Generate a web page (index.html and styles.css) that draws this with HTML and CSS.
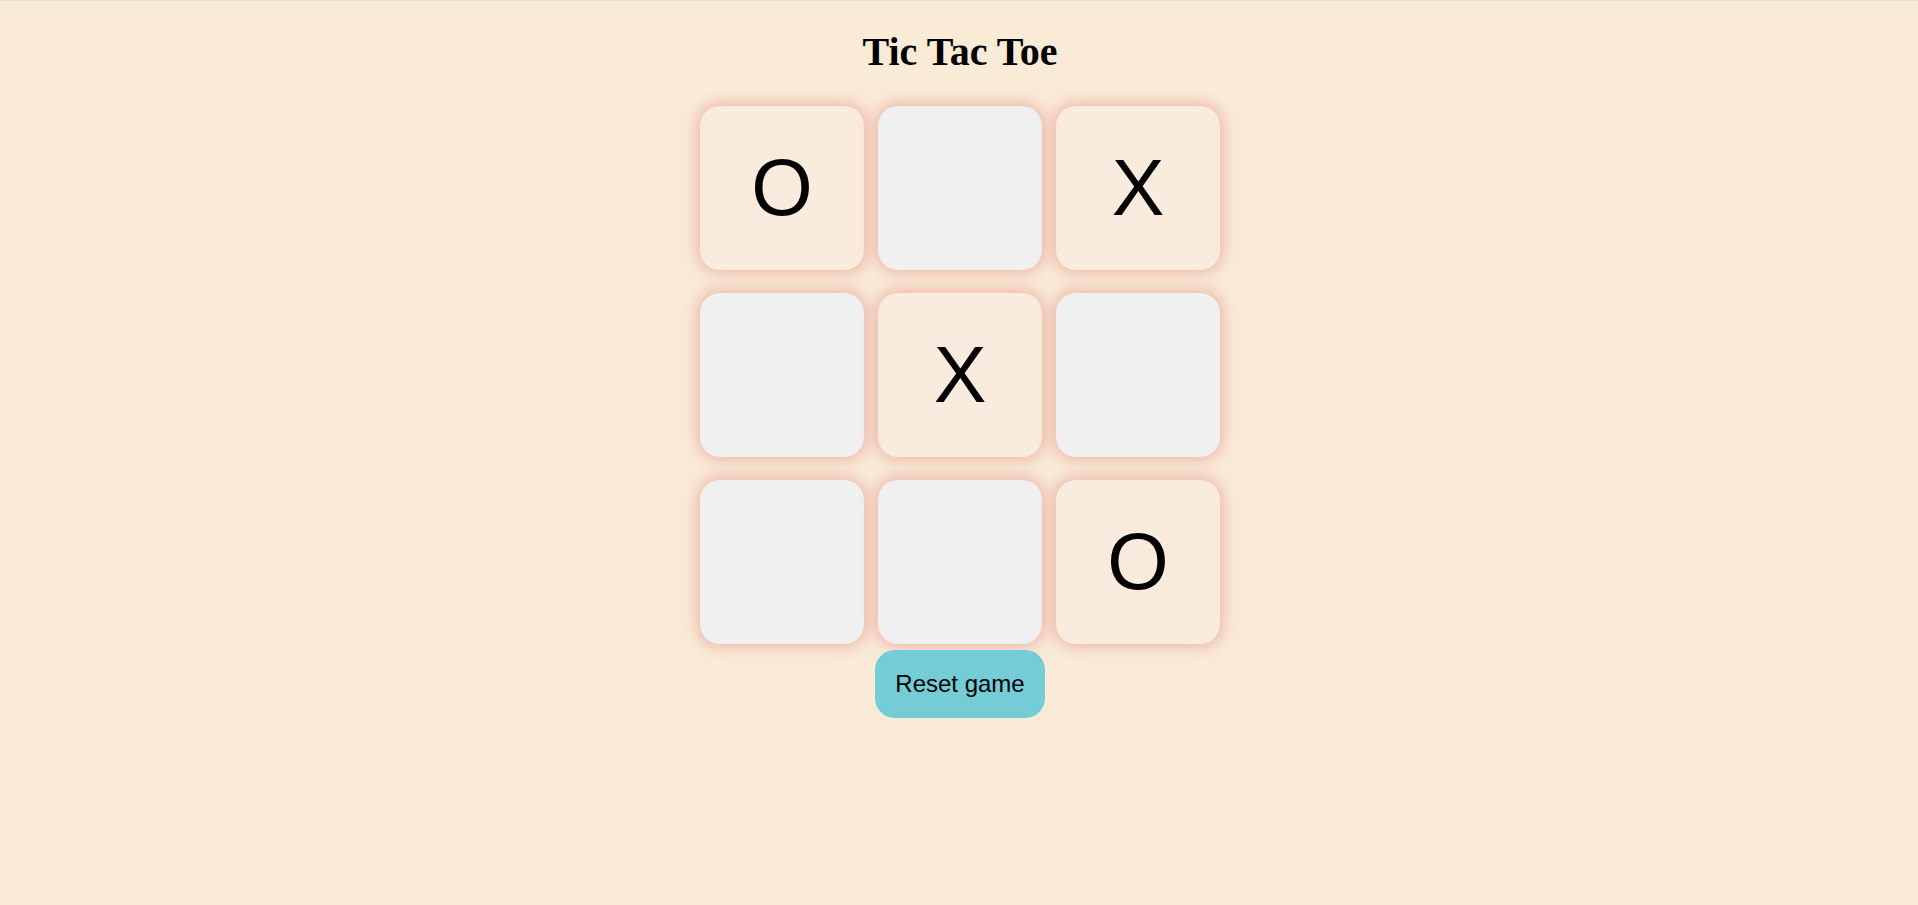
FILE: index.html
```html
<!DOCTYPE html>
<html lang="en">
<head>
<meta charset="utf-8">
<title>Tic Tac Toe</title>
<link rel="stylesheet" href="styles.css">
</head>
<body>
<main class="game">
  <h1 class="title">Tic Tac Toe</h1>
  <div class="board">
    <div class="cell filled">O</div>
    <div class="cell"></div>
    <div class="cell filled">X</div>
    <div class="cell"></div>
    <div class="cell filled">X</div>
    <div class="cell"></div>
    <div class="cell"></div>
    <div class="cell"></div>
    <div class="cell filled">O</div>
  </div>
  <button class="reset">Reset game</button>
</main>
</body>
</html>
```

FILE: styles.css
```css
html, body {
  margin: 0;
  padding: 0;
  height: 100%;
}
body {
  background: #faebd7;
  border-top: 1px solid #e2e2e2;
  box-sizing: border-box;
  font-family: "Liberation Sans", Arial, sans-serif;
}
.game {
  display: flex;
  flex-direction: column;
  align-items: center;
  padding-left: 2px;
}
.title {
  font-family: "Liberation Serif", "Times New Roman", serif;
  font-weight: bold;
  font-size: 40px;
  line-height: 46px;
  margin: 28px 0 31px;
  color: #000;
}
.board {
  display: grid;
  grid-template-columns: repeat(3, 164px);
  grid-auto-rows: 164px;
  column-gap: 14px;
  row-gap: 23px;
}
.cell {
  background: #f0f0f0;
  border-radius: 20px;
  box-shadow: 0 0 14px 4px rgba(228, 150, 138, 0.55);
  display: flex;
  align-items: center;
  justify-content: center;
  font-size: 79px;
  color: #000;
}
.cell.filled {
  background: #f9ebdd;
}
.reset {
  margin-top: 6px;
  background: #73ccd6;
  border: none;
  border-radius: 20px;
  padding: 20px;
  font-family: "Liberation Sans", Arial, sans-serif;
  font-size: 24px;
  color: #000;
  width: 170px;
}
```
